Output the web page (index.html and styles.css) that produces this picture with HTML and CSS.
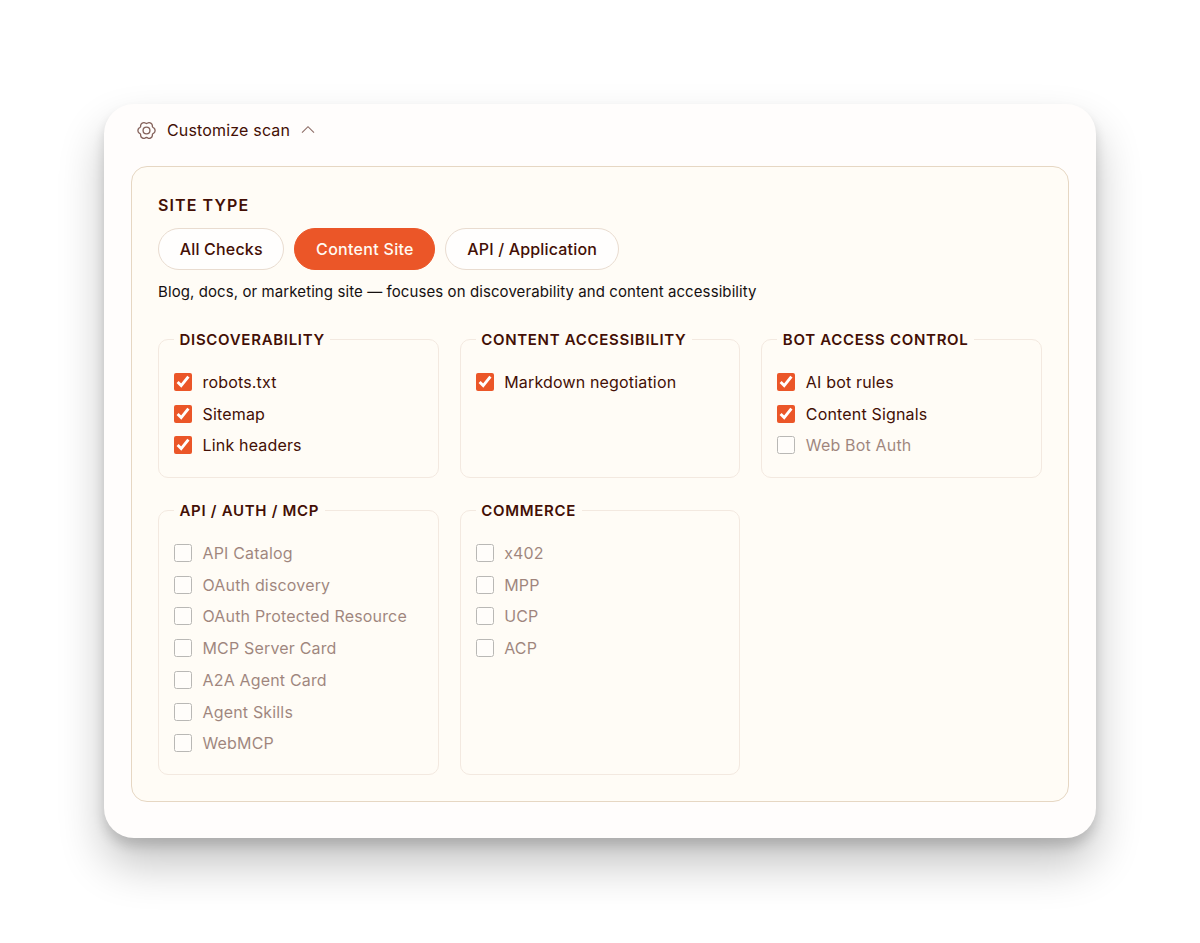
FILE: index.html
```
<!DOCTYPE html>
<html lang="en">
<head>
    <meta charset="UTF-8">
    <meta name="viewport" content="width=device-width, initial-scale=1.0">
    <title>Customize scan</title>
    <link rel="stylesheet" href="styles.css">
</head>
<body>
    <main class="card">
        <button class="toggle" type="button">
            <svg class="gear" viewBox="0 0 20 20" fill="none" stroke="currentColor" stroke-width="1.4" stroke-linejoin="round">
                <path d="M17.75 7.33A3.4 3.4 0 0 1 17.75 12.67A2.2 2.2 0 0 0 16.19 15.38A3.4 3.4 0 0 1 11.56 18.05A2.2 2.2 0 0 0 8.44 18.05A3.4 3.4 0 0 1 3.81 15.38A2.2 2.2 0 0 0 2.25 12.67A3.4 3.4 0 0 1 2.25 7.33A2.2 2.2 0 0 0 3.81 4.62A3.4 3.4 0 0 1 8.44 1.95A2.2 2.2 0 0 0 11.56 1.95A3.4 3.4 0 0 1 16.19 4.62A2.2 2.2 0 0 0 17.75 7.33Z"/>
                <circle cx="10" cy="10" r="3.6"/>
            </svg>
            <span>Customize scan</span>
            <svg class="chevron" viewBox="0 0 14 14" fill="none" stroke="currentColor" stroke-width="1.1">
                <path d="M1 9.7L7 3.7L13 9.7"/>
            </svg>
        </button>

        <section class="panel">
            <h2>Site Type</h2>
            <div class="pills">
                <button class="pill" type="button">All Checks</button>
                <button class="pill active" type="button">Content Site</button>
                <button class="pill" type="button">API / Application</button>
            </div>
            <p class="hint">Blog, docs, or marketing site — focuses on discoverability and content accessibility</p>

            <div class="groups">
                <fieldset>
                    <legend>Discoverability</legend>
                    <label><input type="checkbox" checked><span>robots.txt</span></label>
                    <label><input type="checkbox" checked><span>Sitemap</span></label>
                    <label><input type="checkbox" checked><span>Link headers</span></label>
                </fieldset>
                <fieldset>
                    <legend>Content Accessibility</legend>
                    <label><input type="checkbox" checked><span>Markdown negotiation</span></label>
                </fieldset>
                <fieldset>
                    <legend>Bot Access Control</legend>
                    <label><input type="checkbox" checked><span>AI bot rules</span></label>
                    <label><input type="checkbox" checked><span>Content Signals</span></label>
                    <label class="off"><input type="checkbox"><span>Web Bot Auth</span></label>
                </fieldset>
                <fieldset>
                    <legend>API / Auth / MCP</legend>
                    <label class="off"><input type="checkbox"><span>API Catalog</span></label>
                    <label class="off"><input type="checkbox"><span>OAuth discovery</span></label>
                    <label class="off"><input type="checkbox"><span>OAuth Protected Resource</span></label>
                    <label class="off"><input type="checkbox"><span>MCP Server Card</span></label>
                    <label class="off"><input type="checkbox"><span>A2A Agent Card</span></label>
                    <label class="off"><input type="checkbox"><span>Agent Skills</span></label>
                    <label class="off"><input type="checkbox"><span>WebMCP</span></label>
                </fieldset>
                <fieldset>
                    <legend>Commerce</legend>
                    <label class="off"><input type="checkbox"><span>x402</span></label>
                    <label class="off"><input type="checkbox"><span>MPP</span></label>
                    <label class="off"><input type="checkbox"><span>UCP</span></label>
                    <label class="off"><input type="checkbox"><span>ACP</span></label>
                </fieldset>
            </div>
        </section>
    </main>
</body>
</html>
```
FILE: styles.css
```
* {
    box-sizing: border-box;
}

body {
    margin: 0;
    padding-bottom: 1px;
    min-height: 943px;
    background: #fff;
    color: #430f05;
    font-family: Inter, "Liberation Sans", sans-serif;
    font-size: 16px;
    display: flex;
    justify-content: center;
    align-items: center;
}

button {
    font: inherit;
    color: inherit;
    cursor: pointer;
}

.card {
    width: 992px;
    height: 734px;
    padding: 10px 27px 0;
    background: #fffdfc;
    border-radius: 30px;
    box-shadow: 0 26px 46px rgba(0, 0, 0, 0.24), 0 8px 12px rgba(0, 0, 0, 0.14);
}

.toggle {
    display: flex;
    align-items: center;
    height: 32px;
    padding: 0 6px;
    border: none;
    background: none;
    letter-spacing: 0.17px;
}

.gear {
    width: 19px;
    height: 19px;
    margin-right: 11px;
    opacity: 0.65;
}

.chevron {
    width: 14px;
    height: 14px;
    margin-left: 11px;
    opacity: 0.6;
}

.panel {
    height: 636px;
    margin-top: 20px;
    padding: 27px 26px 0;
    background: #fffcf6;
    border: 1px solid #e6d7c3;
    border-radius: 16px;
}

h2 {
    margin: 0;
    font-size: 16px;
    line-height: 22px;
    font-weight: 600;
    letter-spacing: 1.1px;
    text-transform: uppercase;
}

.pills {
    display: flex;
    gap: 10px;
    margin-top: 12px;
}

.pill {
    height: 42px;
    padding: 0 20.7px;
    background: #fffefd;
    border: 1px solid #e9dcd0;
    border-radius: 21px;
    font-weight: 500;
    letter-spacing: 0.18px;
}

.pill.active {
    background: #eb5628;
    border-color: #eb5628;
    color: #fffaf3;
    letter-spacing: 0.3px;
}

.hint {
    margin: 11px 0 0;
    color: #151010;
    font-size: 15px;
    line-height: 22px;
    letter-spacing: 0.09px;
}

.groups {
    display: grid;
    grid-template-columns: repeat(3, 1fr);
    grid-template-rows: 149px 275px;
    gap: 22px 21px;
    margin-top: 26px;
}

fieldset {
    min-width: 0;
    margin: 0;
    padding: 16px 15px 0;
    border: 1px solid #f3e9e0;
    border-radius: 10px;
}

legend {
    padding: 0 5.5px;
    font-size: 15px;
    line-height: 21px;
    font-weight: 600;
    letter-spacing: 0.7px;
    text-transform: uppercase;
}

label {
    display: flex;
    align-items: center;
    gap: 10.5px;
    height: 31.75px;
    letter-spacing: 0.17px;
    cursor: pointer;
}

label input {
    width: 18px;
    height: 18px;
    margin: 0;
    accent-color: #eb5628;
}

.off {
    opacity: 0.5;
}
```
